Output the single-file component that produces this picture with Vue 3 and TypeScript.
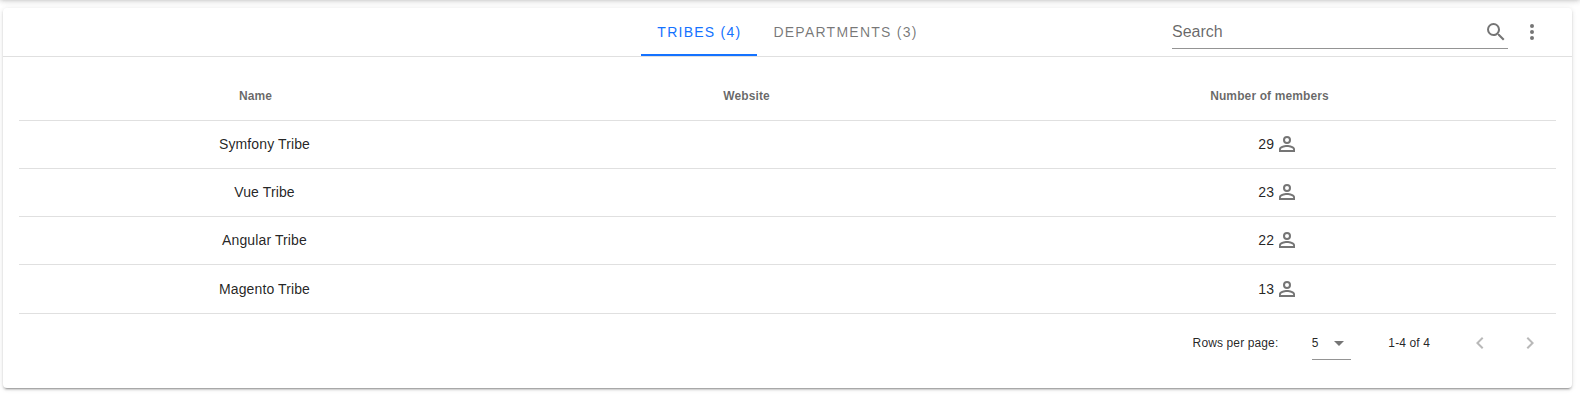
<script setup lang="ts">
import { ref } from 'vue'

interface Tribe {
  name: string
  website: string
  members: number
}

const tabs = ['Tribes (4)', 'Departments (3)']
const activeTab = ref(0)
const search = ref('')
const tribes: Tribe[] = [
  { name: 'Symfony Tribe', website: '', members: 29 },
  { name: 'Vue Tribe', website: '', members: 23 },
  { name: 'Angular Tribe', website: '', members: 22 },
  { name: 'Magento Tribe', website: '', members: 13 },
]
</script>

<template>
  <div class="page">
    <div class="app-bar"></div>
    <main class="card">
      <header class="toolbar">
        <nav class="tabs">
          <button
            v-for="(tab, i) in tabs"
            :key="tab"
            class="tab"
            :class="{ active: i === activeTab }"
            @click="activeTab = i"
          >{{ tab }}</button>
        </nav>
        <div class="actions">
          <label class="search">
            <input v-model="search" type="text" placeholder="Search" />
            <svg class="icon" viewBox="0 0 24 24"><path d="M9.5,3A6.5,6.5 0 0,1 16,9.5C16,11.11 15.41,12.59 14.44,13.73L14.71,14H15.5L20.5,19L19,20.5L14,15.5V14.71L13.73,14.44C12.59,15.41 11.11,16 9.5,16A6.5,6.5 0 0,1 3,9.5A6.5,6.5 0 0,1 9.5,3M9.5,5C7,5 5,7 5,9.5C5,12 7,14 9.5,14C12,14 14,12 14,9.5C14,7 12,5 9.5,5Z" /></svg>
          </label>
          <svg class="icon" viewBox="0 0 24 24"><path d="M12,16A2,2 0 0,1 14,18A2,2 0 0,1 12,20A2,2 0 0,1 10,18A2,2 0 0,1 12,16M12,10A2,2 0 0,1 14,12A2,2 0 0,1 12,14A2,2 0 0,1 10,12A2,2 0 0,1 12,10M12,4A2,2 0 0,1 14,6A2,2 0 0,1 12,8A2,2 0 0,1 10,6A2,2 0 0,1 12,4Z" /></svg>
        </div>
      </header>

      <section class="table">
        <div class="row head">
          <span>Name</span>
          <span>Website</span>
          <span>Number of members</span>
        </div>
        <div v-for="tribe in tribes" :key="tribe.name" class="row">
          <span>{{ tribe.name }}</span>
          <span>{{ tribe.website }}</span>
          <span class="members">
            {{ tribe.members }}
            <svg class="icon" viewBox="0 0 24 24"><path d="M12,4A4,4 0 0,1 16,8A4,4 0 0,1 12,12A4,4 0 0,1 8,8A4,4 0 0,1 12,4M12,6A2,2 0 0,0 10,8A2,2 0 0,0 12,10A2,2 0 0,0 14,8A2,2 0 0,0 12,6M12,13C14.67,13 20,14.33 20,17V20H4V17C4,14.33 9.33,13 12,13M12,14.9C9.03,14.9 5.9,16.36 5.9,17V18.1H18.1V17C18.1,16.36 14.97,14.9 12,14.9Z" /></svg>
          </span>
        </div>
      </section>

      <footer class="footer">
        <span class="label">Rows per page:</span>
        <div class="select">
          <span>5</span>
          <svg class="icon" viewBox="0 0 24 24"><path d="M7,10L12,15L17,10H7Z" /></svg>
        </div>
        <span class="range">1-4 of 4</span>
        <svg class="icon disabled" viewBox="0 0 24 24"><path d="M15.41,16.58L10.83,12L15.41,7.41L14,6L8,12L14,18L15.41,16.58Z" /></svg>
        <svg class="icon disabled next" viewBox="0 0 24 24"><path d="M8.59,16.58L13.17,12L8.59,7.41L10,6L16,12L10,18L8.59,16.58Z" /></svg>
      </footer>
    </main>
  </div>
</template>

<style>
body {
  margin: 0;
}
</style>

<style scoped>
.page {
  box-sizing: border-box;
  display: flex;
  flex-direction: column;
  height: 413px;
  padding: 0 8px 0 3px;
  overflow: hidden;
  background: #fff;
  color: rgba(0, 0, 0, 0.87);
  font-family: "Liberation Sans", Arial, sans-serif;
  letter-spacing: 0.12px;
}
.app-bar {
  flex: none;
  height: 56px;
  margin: -59px -8px 11px -3px;
  box-shadow: 0 2px 4px -1px rgba(0, 0, 0, 0.2), 0 4px 5px 0 rgba(0, 0, 0, 0.14), 0 1px 10px 0 rgba(0, 0, 0, 0.12);
}
.card {
  position: relative;
  flex: none;
  box-sizing: border-box;
  width: 1569px;
  height: 380px;
  background: #fff;
  border-radius: 4px;
  box-shadow: 0 3px 1px -2px rgba(0, 0, 0, 0.2), 0 2px 2px 0 rgba(0, 0, 0, 0.14), 0 1px 5px 0 rgba(0, 0, 0, 0.12);
}
.icon {
  flex: none;
  width: 24px;
  height: 24px;
  fill: #757575;
}
.toolbar {
  display: grid;
  grid-template-columns: 1fr auto 1fr;
  height: 48px;
  border-bottom: 1px solid #e0e0e0;
}
.tabs {
  grid-column: 2;
  display: flex;
  height: 48px;
}
.tab {
  box-sizing: border-box;
  padding: 2px 16px 0;
  border: 0;
  border-bottom: 2px solid transparent;
  background: none;
  color: rgba(0, 0, 0, 0.54);
  font: 14px/20px "Liberation Sans", Arial, sans-serif;
  letter-spacing: 0.0892857143em;
  text-transform: uppercase;
}
.tab.active {
  border-color: #1472ff;
  color: #1472ff;
}
.actions {
  display: flex;
  justify-content: flex-end;
  gap: 12px;
  padding: 12px 28px 0 0;
}
.search {
  display: flex;
  width: 336px;
  height: 28px;
  border-bottom: 1px solid #949494;
}
.search input {
  flex: 1;
  min-width: 0;
  height: 24px;
  padding: 0;
  border: 0;
  outline: 0;
  background: none;
  font: 16px/20px "Liberation Sans", Arial, sans-serif;
}
.search input::placeholder {
  color: rgba(0, 0, 0, 0.6);
  opacity: 1;
}
.table {
  padding: 16px 16px 0;
}
.row {
  box-sizing: border-box;
  display: grid;
  grid-template-columns: 491px 491px 1fr;
  align-items: center;
  height: 48px;
  padding-bottom: 1px;
  border-bottom: 1px solid #e0e0e0;
  font-size: 14px;
  text-align: center;
}
.row:last-child {
  height: 49px;
  padding-top: 1px;
}
.head {
  color: rgba(0, 0, 0, 0.6);
  font-size: 12px;
  font-weight: 700;
}
.head span {
  padding-right: 18px;
}
.members {
  display: flex;
  align-items: center;
  justify-content: center;
}
.members .icon {
  margin-left: 0.5px;
}
.footer {
  display: flex;
  align-items: center;
  height: 58px;
  padding-right: 30px;
  justify-content: flex-end;
  font-size: 12px;
}
.select {
  display: flex;
  align-items: center;
  justify-content: space-between;
  width: 39px;
  height: 32px;
  margin: 1px 37px 0 34px;
  border-bottom: 1px solid #949494;
}
.select span {
  margin-left: -0.5px;
}
.range {
  margin-right: 38px;
}
.disabled {
  opacity: 0.5;
}
.next {
  margin-left: 26px;
}
</style>
